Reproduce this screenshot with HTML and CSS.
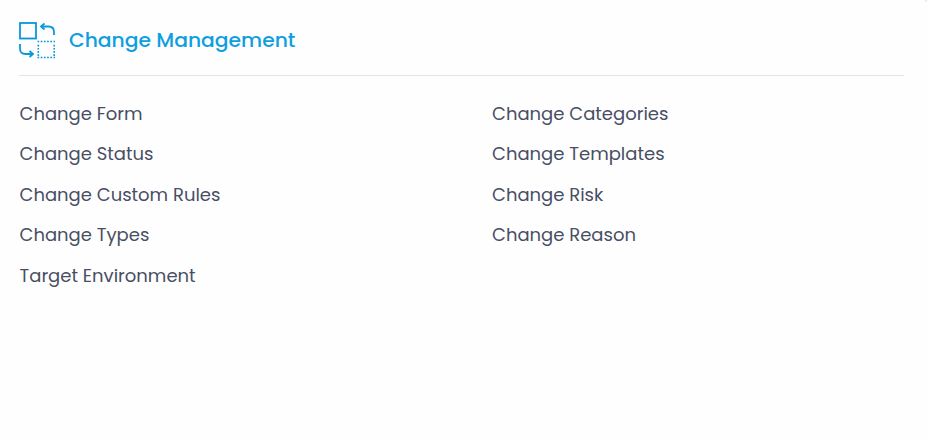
FILE: index.html
```
<!DOCTYPE html>
<html lang="en">
<head>
  <meta charset="UTF-8" />
  <meta name="viewport" content="width=device-width, initial-scale=1" />
  <title>Change Management</title>
  <link rel="stylesheet" href="styles.css">
</head>
<body>
  <div class="card">
    <div class="card-header">
      <svg class="card-icon" width="38" height="38" viewBox="0 0 38 38" fill="none" stroke="#0799dc" stroke-width="1.800">
        <rect x="1" y="2" width="16" height="15.500" />
        <path d="M35 14V11Q35 5.500 29.500 5.500H22" />
        <path d="M25.500 2.500L22 5.500L25.500 8.500" />
        <path d="M1 23V27.500Q1 33 6.500 33H13.500" />
        <path d="M10.500 30L14 33L10.500 36" />
        <path d="M18.500 20.500H36M18.500 36.500H36M19.300 23.700V35M35.200 23.700V35" stroke-width="1.600" stroke-dasharray="1.700 1.500" />
      </svg>
      <h2>Change Management</h2>
    </div>
    <div class="links">
      <ul>
        <li><a>Change Form</a></li>
        <li><a>Change Status</a></li>
        <li><a>Change Custom Rules</a></li>
        <li><a>Change Types</a></li>
        <li><a>Target Environment</a></li>
      </ul>
      <ul>
        <li><a>Change Categories</a></li>
        <li><a>Change Templates</a></li>
        <li><a>Change Risk</a></li>
        <li><a>Change Reason</a></li>
      </ul>
    </div>
  </div>
</body>
</html>
```
FILE: styles.css
```
body {
  margin: 0;
  background: #e4e4e4;
  font-family: Poppins, Inter, sans-serif;
}
.card {
  box-sizing: border-box;
  height: 100vh;
  padding: 20px 23px 0 19px;
  background: #fefefe;
  border-top-right-radius: 4px;
}
.card-header {
  display: flex;
  align-items: center;
  height: 55px;
  border-bottom: 1px solid #e1e4ec;
}
.card-icon {
  align-self: flex-start;
  margin-top: 1px;
}
h2 {
  margin: 0 0 15px 12px;
  font-size: 20.300px;
  font-weight: 500;
  line-height: 30px;
  color: #0f9fe0;
}
.links {
  display: grid;
  grid-template-columns: 472.500px 1fr;
  padding: 17.600px 0 0 0.500px;
}
ul {
  margin: 0;
  padding: 0;
  list-style: none;
}
li {
  height: 40.500px;
  line-height: 40.500px;
}
a {
  font-size: 18px;
  font-weight: 400;
  color: #484e64;
}
```
